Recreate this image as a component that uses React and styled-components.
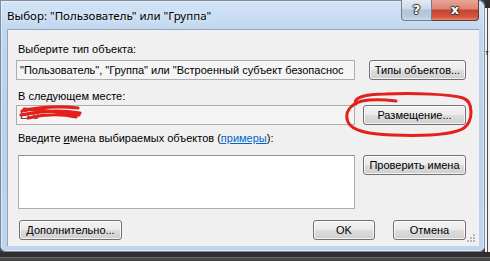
import React from 'react'
import styled, { createGlobalStyle } from 'styled-components'

const Global = createGlobalStyle`
  html, body { margin: 0; padding: 0; }
  body {
    width: 490px;
    height: 261px;
    overflow: hidden;
    background: #3b3b3b;
    font-family: "Liberation Sans", Arial, sans-serif;
  }
`

const Screen = styled.div`
  position: relative;
  width: 490px;
  height: 261px;
  display: flex;
  flex-direction: column;
  background: #3b3b3b;
  overflow: hidden;
`

const Top = styled.div`
  display: flex;
  height: 252px;
`

const BehindRight = styled.div`
  flex: 1;
  background: linear-gradient(90deg, #f4f4f4 0 2px, #4a4a4a 2px 3px, #f4f4f4 3px);
  font-size: 8px;
  line-height: 10px;
  color: #222;
  padding-top: 40px;
  overflow: hidden;
  border-top: 8px solid #2e2e2e;
`

const BehindBottom = styled.div`
  flex: 1;
  background: linear-gradient(#2f2f2f 0 5px, #6a6a6a 5px 6px, #474747 6px);
`

const Window = styled.div`
  width: 485px;
  display: flex;
  flex-direction: column;
  background: linear-gradient(#d4e4f6, #c1d7ef 30px, #b9d1ea 120px, #bfd5ed);
  border-radius: 0 7px 6px 6px;
  box-shadow: inset 0 0 0 1px rgba(40, 60, 90, 0.55), inset 0 0 0 2px rgba(255, 255, 255, 0.45);
`

const TitleBar = styled.div`
  height: 30px;
  display: flex;
  align-items: flex-start;
  justify-content: space-between;
`

const Title = styled.div`
  padding: 8px 0 0 7px;
  font-family: "Noto Sans", sans-serif;
  font-size: 11.5px;
  line-height: 16px;
  color: #000;
  text-shadow: 0 0 6px rgba(255, 255, 255, 0.9);
`

const Controls = styled.div`
  display: flex;
  margin-right: 6px;
`

const CapButton = styled.div`
  height: 20px;
  width: ${p => p.$w}px;
  display: flex;
  align-items: center;
  justify-content: center;
  border: 1px solid ${p => (p.$close ? '#6b3a33' : '#6d7f94')};
  border-top: none;
  border-radius: ${p => (p.$close ? '0 0 4px 0' : '0 0 0 4px')};
  border-left: ${p => (p.$close ? 'none' : undefined)};
  background: ${p =>
    p.$close
      ? 'linear-gradient(#e9a497, #dc8574 45%, #c8412f 50%, #d35640 85%, #e5886b)'
      : 'linear-gradient(#e3ebf4, #ccd9e8 45%, #b3c4d8 50%, #b9cadd 85%, #cfdbe8)'};
  color: #fff;
  font-family: "DejaVu Sans", sans-serif;
  font-weight: bold;
  font-size: 13px;
  line-height: 18px;
  text-shadow: 0 0 1px #333, 1px 0 1px #333, -1px 0 1px #333, 0 1px 1px #333, 0 -1px 1px #333;
`

const ClientWrap = styled.div`
  position: relative;
  flex: 1;
  display: flex;
  flex-direction: column;
`

const Client = styled.div`
  flex: 1;
  margin: 0 6px 6px 7px;
  background: #f0f0f0;
  border: 1px solid #94a6bb;
  border-width: 1px 0 0 1px;
  display: flex;
  flex-direction: column;
  padding: 12px 13px 6px 8px;
  font-size: 11px;
  color: #000;
`

const Label = styled.div`
  margin: ${p => p.$mt}px 0 0 2px;
  height: 15px;
  line-height: 15px;
  white-space: nowrap;
`

const Row = styled.div`
  margin-top: ${p => p.$mt}px;
  display: grid;
  grid-template-columns: ${p => p.$box}px 1fr;
  align-items: start;
`

const Field = styled.div`
  height: 20px;
  box-sizing: border-box;
  border: 1px solid #adadad;
  background: #f5f5f5;
  line-height: 18px;
  padding-left: 3px;
  white-space: nowrap;
  overflow: hidden;
  color: ${p => (p.$dim ? '#333' : '#000')};
`

const Area = styled.div`
  margin-left: 2px;
  height: 54px;
  box-sizing: border-box;
  border: 1px solid #abadb3;
  border-top-color: #8e9095;
  background: #fff;
`

const Button = styled.div`
  justify-self: end;
  width: ${p => p.$w}px;
  margin-left: ${p => p.$ml || 0}px;
  height: 20px;
  box-sizing: border-box;
  border: 1px solid #707070;
  border-radius: 3px;
  background: linear-gradient(#f2f2f2, #ebebeb 50%, #dddddd 50%, #cfcfcf);
  box-shadow: inset 0 0 0 1px rgba(255, 255, 255, 0.75);
  display: flex;
  align-items: center;
  justify-content: center;
  white-space: nowrap;
  line-height: 18px;
`

const Footer = styled.div`
  margin-top: 11px;
  display: flex;
  align-items: center;
  padding-left: 3px;
`

const Spacer = styled.div`
  flex: 1;
`

const Link = styled.span`
  color: #0066cc;
  text-decoration: underline;
`

const Key = styled.span`
  text-decoration: underline;
`

const Grip = styled.svg`
  position: absolute;
  right: 7px;
  bottom: 7px;
`

const Marks = styled.svg`
  position: absolute;
  left: 0;
  top: 0;
  pointer-events: none;
`

const gripDots = [[11, 5], [8, 8], [11, 8], [5, 11], [8, 11], [11, 11]]

export default function App() {
  return (
    <Screen>
      <Global />
      <Top>
        <Window>
          <TitleBar>
            <Title>Выбор: "Пользователь" или "Группа"</Title>
            <Controls>
              <CapButton $w={29}>?</CapButton>
              <CapButton $w={46} $close>x</CapButton>
            </Controls>
          </TitleBar>
          <ClientWrap>
            <Client>
              <Label $mt={0}>Выберите тип объекта:</Label>
              <Row $mt={3} $box={339}>
                <Field>"Пользователь", "Группа" или "Встроенный субъект безопаснос</Field>
                <Button $w={97}>Типы объектов...</Button>
              </Row>
              <Label $mt={9}>В следующем месте:</Label>
              <Row $mt={1} $box={339}>
                <Field $dim>Есо</Field>
                <Button $w={103}>Размещение...</Button>
              </Row>
              <Label $mt={6}>
                Введите <Key>и</Key>мена выбираемых объектов (<Link>примеры</Link>):
              </Label>
              <Row $mt={9} $box={339}>
                <Area />
                <Button $w={103}>Проверить имена</Button>
              </Row>
              <Footer>
                <Button $w={103}>Дополнительно...</Button>
                <Spacer />
                <Button $w={62}>OK</Button>
                <Button $w={73} $ml={18}>Отмена</Button>
              </Footer>
            </Client>
            <Grip width="16" height="16" viewBox="0 0 16 16">
              {gripDots.map(([x, y]) => (
                <rect key={x + '-' + y} x={x} y={y} width="2" height="2" fill="#b8b8b8" />
              ))}
            </Grip>
          </ClientWrap>
        </Window>
        <BehindRight>т</BehindRight>
      </Top>
      <BehindBottom />
      <Marks width="490" height="261" viewBox="0 0 490 261">
        <g fill="none" stroke="#e3201c" strokeLinecap="round" strokeLinejoin="round">
          <path d="M22 111 C40 107, 60 106, 78 108 M21 115 C40 111, 62 110, 80 113 M28 118 C45 114, 62 114, 76 117 M24 109 C42 110, 58 112, 79 115" strokeWidth="3.2" />
          <path d="M356 104 C352 98, 365 94, 385 94 C415 93, 450 94, 463 98 C474 102, 473 121, 464 128 C452 136, 420 136, 392 135 C368 134, 352 131, 348 122 C344 113, 350 104, 362 101 C372 99, 388 100, 396 101" strokeWidth="3" />
        </g>
      </Marks>
    </Screen>
  )
}
